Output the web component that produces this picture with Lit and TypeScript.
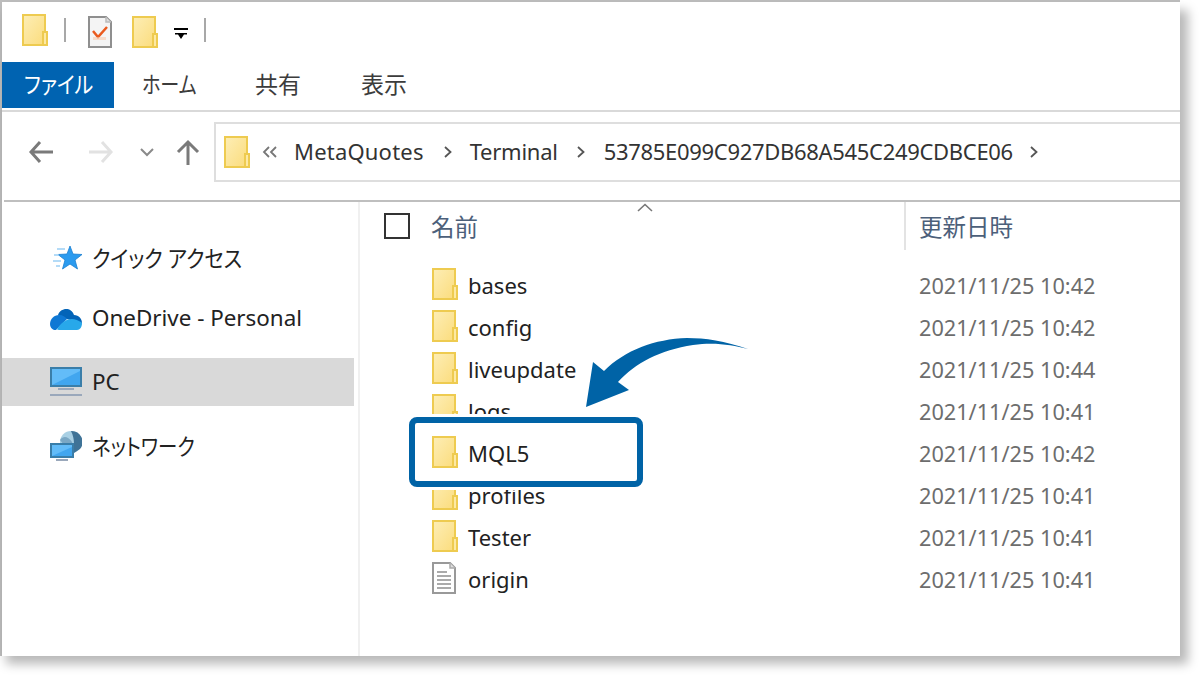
import { LitElement, html, css, svg } from "lit";
import { customElement } from "lit/decorators.js";

const folder = (cls = "ficon") => html`<svg class=${cls} width="26" height="32" viewBox="0 0 26 32">
  <defs><linearGradient id="fg" x1="0" y1="0" x2="1" y2="1"><stop offset="0" stop-color="#fdeeb6"/><stop offset="1" stop-color="#fbdc7c"/></linearGradient></defs>
  <rect x="1" y="1" width="22" height="30" fill="url(#fg)" stroke="#eecb50" stroke-width="2"/>
  <rect x="21" y="18" width="4" height="13" fill="#fde9a4" stroke="#eecb50" stroke-width="2"/>
</svg>`;

const docIcon = html`<svg class="ficon" width="26" height="32" viewBox="0 0 26 32">
  <path d="M1 1H18L23 6V31H1Z" fill="#fff" stroke="#999" stroke-width="2"/>
  <path d="M18 1V6H23" fill="#ddd" stroke="#aaa" stroke-width="1.5"/>
  ${[9, 13, 17, 21, 25].map((y) => svg`<rect x="5" y=${y} width=${y === 9 ? 10 : 14} height="2" fill="#aaa"/>`)}
</svg>`;

const star = html`<svg width="32" height="32" viewBox="0 0 32 32">
  <path d="M20 4L23 12L32 12.500L25 18L27.500 27L20 22L12.500 27L15 18L8 12.500L17 12Z" fill="#2b9bef" stroke="#1b7fd0" stroke-width=".8"/>
  <path d="M7 7H15M4 13H9M3 19H11M6 24H10" stroke="#9ccff5" stroke-width="1.500"/>
</svg>`;

const cloud = html`<svg width="32" height="24" viewBox="0 0 32 24">
  <path d="M8 9C10 2 21 0 24 9C29 9 32 13 32 17L13 12Z" fill="#0364b8"/>
  <path d="M0 18C0 13 4 9 9 9C13 9 15 11 17 13L6 24H4C1.500 23 0 21 0 18Z" fill="#0f78d4"/>
  <path d="M7 23.500C12 14 22 9 32 17C32 21 30 24 27 24H9Z" fill="#28a8ea"/>
</svg>`;

const monitor = (x: number, y: number, w: number, h: number) => svg`
  <rect x=${x + 1} y=${y + 1} width=${w - 2} height=${h - 2} fill="#63bcf8" stroke="#3a7ea9" stroke-width="2"/>
  <path d="M${x + 2} ${y + h - 2}L${x + w - 2} ${y + 4}V${y + h - 2}Z" fill="#41a6ef"/>`;

const pc = html`<svg width="32" height="30" viewBox="0 0 32 30">
  ${monitor(0, 0, 32, 20)}
  <rect x="8" y="21" width="16" height="2" fill="#9aa8bb"/>
  <rect x="0" y="27" width="32" height="2" fill="#9aa8bb"/>
</svg>`;

const network = html`<svg width="32" height="32" viewBox="0 0 32 32">
  <circle cx="21" cy="12" r="11" fill="#a9d0e4"/>
  <path d="M21 1A11 11 0 0 1 30 19L24 23V14C24 9 23 5 21 1Z" fill="#3f7397"/>
  <path d="M10 10C14 5 18 7 22 12L24 20L14 15Z" fill="#7aa7c4"/>
  ${monitor(0, 13, 24, 15)}
  <rect x="6" y="29" width="12" height="2" fill="#9aa8bb"/>
</svg>`;

const crumbArrow = (cls: string) => html`<svg class="sep ${cls}" width="8" height="12" viewBox="0 0 8 12"><path d="M1 1L6.500 6L1 11" fill="none" stroke="#555" stroke-width="1.800"/></svg>`;

const FILES: { name: string; date: string; doc?: boolean }[] = [
  { name: "bases", date: "2021/11/25 10:42" },
  { name: "config", date: "2021/11/25 10:42" },
  { name: "liveupdate", date: "2021/11/25 10:44" },
  { name: "logs", date: "2021/11/25 10:41" },
  { name: "MQL5", date: "2021/11/25 10:42" },
  { name: "profiles", date: "2021/11/25 10:41" },
  { name: "Tester", date: "2021/11/25 10:41" },
  { name: "origin", date: "2021/11/25 10:41", doc: true },
];

@customElement("app-root")
export class AppRoot extends LitElement {
  static styles = css`
    :host {
      display: block;
      width: 1200px;
      height: 676px;
      background: #fff;
      overflow: hidden;
      font-family: "Noto Sans", "Noto Sans CJK JP", sans-serif;
      font-feature-settings: "palt";
      color: #222;
    }
    .window {
      position: relative;
      width: 1180px;
      height: 656px;
      box-sizing: border-box;
      border-top: 2px solid #bdbdbd;
      border-left: 2px solid #bdbdbd;
      background: #fff;
      display: flex;
      flex-direction: column;
    }
    .shadow {
      position: absolute;
      inset: 8px 0 0 4px;
      box-shadow: 4px 4px 10px 4px rgba(0, 0, 0, 0.28);
      z-index: 0;
    }
    .cover {
      position: relative;
      z-index: 1;
      flex: 1;
      display: flex;
      flex-direction: column;
      background: #fff;
      min-height: 0;
    }
    .qat {
      height: 60px;
      display: flex;
      align-items: flex-start;
      padding-left: 20px;
      flex: none;
    }
    .qat .first { margin-top: 12px; }
    .qsep {
      width: 2px;
      height: 24px;
      background: #a8a8a8;
      margin: 16px 0 0 16px;
    }
    .qdoc { margin: 14px 0 0 22px; }
    .qfolder { margin: 14px 0 0 20px; }
    .qdrop { margin: 26px 0 0 16px; }
    .qsep.last { margin-left: 16px; }
    .tabs {
      height: 46px;
      padding-bottom: 2px;
      border-bottom: 2px solid #d9d9d9;
      display: grid;
      grid-template-columns: 112px 141px 106px 120px;
      flex: none;
      font-size: 23px;
      color: #3c3c3c;
    }
    .tab {
      display: flex;
      align-items: center;
      padding-left: 28px;
      padding-bottom: 2px;
      box-sizing: border-box;
      height: 46px;
      line-height: 1;
    }
    .tab.sub { padding-left: 0; }
    .tab.file {
      background: #0063b1;
      color: #fff;
      padding-left: 22px;
    }
    .narrow {
      display: inline-block;
      white-space: nowrap;
      transform-origin: left center;
    }
    .n-file { font-size: 23px; transform: scaleX(0.87); }
    .n-home { font-size: 23px; transform: scaleX(0.83); }
    .n-quick { font-size: 23px; transform: scaleX(0.888); }
    .n-net { font-size: 23px; transform: scaleX(0.845); }
    .addr-row {
      height: 78px;
      padding-top: 10px;
      flex: none;
      display: flex;
      align-items: flex-start;
      border-bottom: 2px solid #bfbfbf;
      margin-left: 2px;
    }
    .nav {
      width: 210px;
      flex: none;
      display: flex;
      align-items: center;
      height: 60px;
      padding-left: 24px;
      box-sizing: border-box;
    }
    .nav .fwd { margin-left: 34px; }
    .nav .chev { margin-left: 26px; }
    .nav .up { margin-left: 22px; }
    .addr {
      flex: 1;
      height: 60px;
      box-sizing: border-box;
      border: 2px solid #dedede;
      border-right: none;
      display: flex;
      align-items: center;
      padding-left: 8px;
      font-size: 22px;
      color: #333;
    }
    .addr .back2 { margin: 0 0 0 12px; }
    .crumb { white-space: nowrap; margin-top: -2px; }
    .crumb.a { margin-left: 16px; letter-spacing: 0.200px; }
    .crumb.b { letter-spacing: -0.250px; }
    .crumb.c { letter-spacing: -0.310px; }
    .sep { flex: none; }
    .sep.s1 { margin: 0 18px 0 20px; }
    .sep.s2 { margin: 0 19px; }
    .sep.s3 { margin: 0 0 0 17px; }
    .body {
      flex: 1;
      display: flex;
      min-height: 0;
    }
    .side {
      width: 358px;
      box-sizing: border-box;
      flex: none;
      border-right: 2px solid #f0f0f0;
      padding-top: 32px;
      font-size: 22.400px;
      color: #222;
    }
    .item {
      width: 352px;
      height: 48px;
      display: flex;
      align-items: center;
      box-sizing: border-box;
      padding-left: 48px;
      gap: 10px;
      margin-bottom: 16px;
    }
    .item span { margin-top: -2px; }
    .item.q { margin-bottom: 12px; }
    .item.sel { background: #d9d9d9; }
    .item svg { flex: none; }
    .main {
      flex: 1;
      position: relative;
      min-width: 0;
    }
    .head {
      height: 48px;
      display: grid;
      grid-template-columns: 24px 26px 21px 473px 2px 13px 1fr;
      align-items: center;
      font-size: 23.500px;
      color: #4c607a;
      margin-bottom: 15px;
    }
    .check {
      grid-column: 2;
      width: 26px;
      height: 26px;
      box-sizing: border-box;
      border: 2px solid #333;
      background: #fff;
    }
    .h-name { grid-column: 4; }
    .h-div { grid-column: 5; height: 48px; background: #e3e3e3; }
    .h-date { grid-column: 7; }
    .caret { position: absolute; left: 277px; top: 1px; }
    .rows { font-size: 22px; }
    .row {
      height: 42px;
      display: grid;
      grid-template-columns: 72px 26px 10px 451px 1fr;
      align-items: center;
      position: relative;
    }
    .row .ic { grid-column: 2; display: flex; margin-top: -4px; }
    .row .name { grid-column: 4; color: #222; line-height: 1; margin-top: -2px; }
    .row .date { grid-column: 5; color: #6d6d6d; font-size: 21.700px; line-height: 1; }
    .row.hl { z-index: 1; }
    .hl-box {
      position: absolute;
      left: 49px;
      top: -16px;
      width: 234px;
      height: 70px;
      box-sizing: border-box;
      border: 6px solid #0063a6;
      border-radius: 8px;
      background: #fff;
      box-shadow: 0 0 0 3px #fff;
      z-index: -1;
    }
    .arrow {
      position: absolute;
      left: -2px;
      top: -2px;
      pointer-events: none;
      z-index: 2;
    }
  `;

  render() {
    return html`<div class="window">
      <div class="shadow"></div>
      <div class="cover">
        <div class="qat">
          <span class="first">${folder()}</span>
          <span class="qsep"></span>
          <svg class="qdoc" width="24" height="32" viewBox="0 0 24 32">
            <path d="M1 1H18L23 6V31H1Z" fill="#f4f4f4" stroke="#8f8f8f" stroke-width="2"/>
            <path d="M18 1V6H23" fill="#ddd" stroke="#bbb" stroke-width="1.500"/>
            <path d="M5 15L10 21L19 11" fill="none" stroke="#ea5a1e" stroke-width="2.500"/>
            <path d="M5 21H18V24H5Z" fill="#f9c9ae" opacity=".6"/>
          </svg>
          <span class="qfolder">${folder()}</span>
          <svg class="qdrop" width="14" height="12" viewBox="0 0 14 12">
            <rect width="14" height="2" fill="#000"/>
            <path d="M1 5H13V6.500H10L7 11L4 6.500H1Z" fill="#000"/>
          </svg>
          <span class="qsep last"></span>
        </div>
        <div class="tabs">
          <div class="tab file"><span class="narrow n-file">ファイル</span></div>
          <div class="tab home"><span class="narrow n-home">ホーム</span></div>
          <div class="tab sub">共有</div>
          <div class="tab sub">表示</div>
        </div>
        <div class="addr-row">
          <div class="nav">
            <svg width="26" height="24" viewBox="0 0 26 24"><path d="M25 12H4M12 2L3 12L12 22" fill="none" stroke="#7a7a7a" stroke-width="3"/></svg>
            <svg class="fwd" width="26" height="24" viewBox="0 0 26 24"><path d="M1 12H22M14 2L23 12L14 22" fill="none" stroke="#e2e2e2" stroke-width="3"/></svg>
            <svg class="chev" width="14" height="10" viewBox="0 0 14 10"><path d="M1 2L7 8L13 2" fill="none" stroke="#8a8a8a" stroke-width="2"/></svg>
            <svg class="up" width="24" height="26" viewBox="0 0 24 26"><path d="M12 26V4M2 13L12 3L22 13" fill="none" stroke="#7a7a7a" stroke-width="3"/></svg>
          </div>
          <div class="addr">
            ${folder()}
            <svg class="back2" width="16" height="12" viewBox="0 0 16 12"><path d="M7 1L2 6L7 11M14 1L9 6L14 11" fill="none" stroke="#777" stroke-width="1.800"/></svg>
            <span class="crumb a">MetaQuotes</span>
            ${crumbArrow("s1")}
            <span class="crumb b">Terminal</span>
            ${crumbArrow("s2")}
            <span class="crumb c">53785E099C927DB68A545C249CDBCE06</span>
            ${crumbArrow("s3")}
          </div>
        </div>
        <div class="body">
          <div class="side">
            <div class="item q">${star}<span class="narrow n-quick">クイック アクセス</span></div>
            <div class="item">${cloud}<span>OneDrive - Personal</span></div>
            <div class="item sel">${pc}<span>PC</span></div>
            <div class="item">${network}<span class="narrow n-net">ネットワーク</span></div>
          </div>
          <div class="main">
            <div class="head">
              <span class="check"></span>
              <span class="h-name">名前</span>
              <span class="h-div"></span>
              <span class="h-date">更新日時</span>
            </div>
            <svg class="caret" width="16" height="9" viewBox="0 0 16 9"><path d="M1 8L8 1.500L15 8" fill="none" stroke="#777" stroke-width="1.600"/></svg>
            <div class="rows">
              ${FILES.map(
                (f) => html`<div class="row ${f.name === "MQL5" ? "hl" : ""}">
                  ${f.name === "MQL5" ? html`<span class="hl-box"></span>` : ""}
                  <span class="ic">${f.doc ? docIcon : folder()}</span>
                  <span class="name">${f.name}</span>
                  <span class="date">${f.date}</span>
                </div>`
              )}
            </div>
          </div>
        </div>
        <svg class="arrow" width="1180" height="656" viewBox="0 0 1180 656">
          <path d="M748 349C725 341 705 338 687 338C655 339 625 350 604 371L593 362L586 407L629 390L618 382C635 363 660 350 693 345C715 342 732 345 748 349Z" fill="#0063a6"/>
        </svg>
      </div>
    </div>`;
  }
}
